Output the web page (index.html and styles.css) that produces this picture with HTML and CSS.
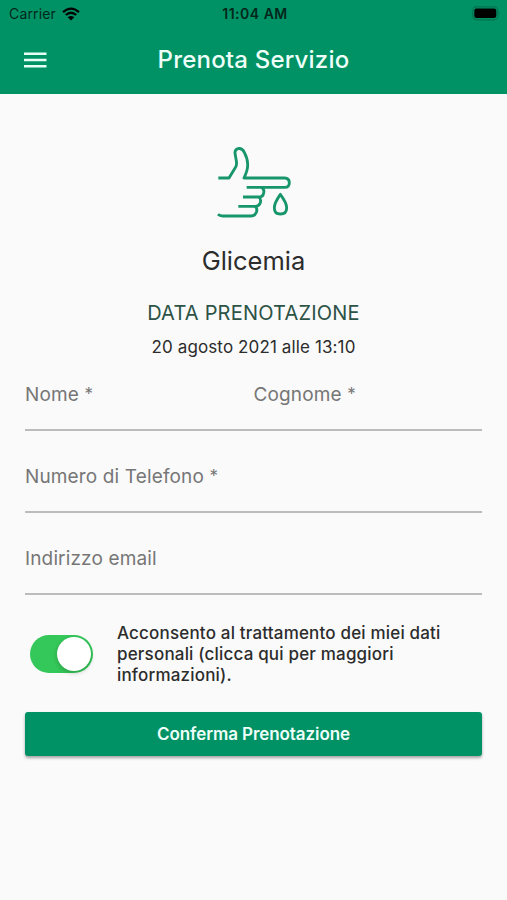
FILE: index.html
```
<!DOCTYPE html>
<html lang="it">

<head>
    <meta charset="UTF-8">
    <meta name="viewport" content="width=device-width, initial-scale=1.0">
    <title>Prenota Servizio</title>
    <link rel="stylesheet" href="styles.css">
</head>

<body>
    <header class="header">
        <div class="statusbar">
            <div class="carrier">
                <span>Carrier</span>
                <svg class="wifi" width="18" height="14" viewBox="0 0 18 14">
                    <path d="M1 5.2Q9-2 17 5.2" />
                    <path d="M3.8 8Q9 3.4 14.2 8" />
                    <path class="dot" d="M9 13.6L5.7 10.2Q9 7.6 12.3 10.2Z" />
                </svg>
            </div>
            <span class="time">11:04 AM</span>
            <svg class="battery" width="29" height="15" viewBox="0 0 29 15">
                <rect class="shell" x="0.8" y="0.8" width="25" height="13" rx="3.8" />
                <rect x="2.3" y="2.5" width="22" height="9.5" rx="2.2" />
                <path class="cap" d="M27 5.2Q28.8 7.3 27 9.4Z" />
            </svg>
        </div>
        <div class="appbar">
            <button class="menu" aria-label="Menu">
                <svg width="24" height="16" viewBox="0 0 24 16">
                    <path d="M1 1.8H23.5M1 8H23.5M1 14.2H23.5" />
                </svg>
            </button>
            <h1 class="title">Prenota Servizio</h1>
        </div>
    </header>

    <main class="content">
        <svg class="icon" width="76" height="74" viewBox="48 30 228 222">
            <path d="M55 126H87L107 93Q111 86 109 74L105 52Q104 41 114 38Q126 35 133 49Q144 70 143 88Q143 104 132 126H254Q268 127 268 140Q268 154 254 154H140" />
            <path d="M184 154Q194 160 191 171Q189 183 177 183H129" />
            <path d="M177 183Q184 190 181 200Q178 211 166 211H115" />
            <path d="M166 211Q174 220 168 231Q164 240 153 240H68Q59 240 54 235" />
            <path d="M241 175Q223 201 223 215Q223 234 241 234Q260 234 260 215Q260 201 241 175Z" />
        </svg>
        <h2 class="service">Glicemia</h2>
        <p class="caption">DATA PRENOTAZIONE</p>
        <p class="date">20 agosto 2021 alle 13:10</p>

        <form class="form">
            <div class="row">
                <div class="field">
                    <label for="nome">Nome <span class="required">*</span></label>
                    <input type="text" id="nome">
                </div>
                <div class="field">
                    <label for="cognome">Cognome <span class="required">*</span></label>
                    <input type="text" id="cognome">
                </div>
            </div>
            <div class="field">
                <label for="telefono">Numero di Telefono <span class="required">*</span></label>
                <input type="tel" id="telefono">
            </div>
            <div class="field">
                <label for="email">Indirizzo email</label>
                <input type="email" id="email">
            </div>

            <div class="consent">
                <button type="button" class="switch" role="switch" aria-checked="true" aria-label="Acconsento">
                    <span class="thumb"></span>
                </button>
                <p class="consent-text">Acconsento al trattamento dei miei dati personali (clicca qui per maggiori informazioni).</p>
            </div>

            <button type="button" class="submit">Conferma Prenotazione</button>
        </form>
    </main>
</body>

</html>
```
FILE: styles.css
```
* {
    box-sizing: border-box;
}

body {
    margin: 0;
    min-height: 900px;
    background-color: #fafafa;
    color: #2c2c2c;
    font-family: Inter, "Liberation Sans", sans-serif;
}

h1,
h2,
p {
    margin: 0;
}

button {
    border: none;
    padding: 0;
    font-family: inherit;
    cursor: pointer;
}

/* Header */
.header {
    height: 94px;
    background-color: #009265;
}

.statusbar {
    display: grid;
    grid-template-columns: 1fr auto 1fr;
    align-items: center;
    height: 27px;
    padding: 0 6px 0 9px;
    color: #04271b;
    font-size: 14px;
}

.carrier {
    display: flex;
    align-items: center;
    gap: 6px;
    letter-spacing: 0.15px;
}

.wifi {
    fill: none;
    stroke: #000;
    stroke-width: 2.3;
}

.wifi .dot {
    fill: #000;
    stroke: none;
}

.time {
    font-weight: 600;
    letter-spacing: 0.5px;
}

.battery {
    justify-self: end;
}

.battery .shell {
    fill: none;
    stroke: #04734f;
    stroke-width: 1.2;
}

.battery .cap {
    fill: #04734f;
}

.appbar {
    display: grid;
    grid-template-columns: 1fr auto 1fr;
    align-items: center;
    height: 66px;
    padding: 0 23px;
}

.menu {
    width: 24px;
    height: 16px;
    background: none;
}

.menu svg {
    display: block;
    fill: none;
    stroke: #e6fff6;
    stroke-width: 2.6;
}

.title {
    margin-top: -1px;
    color: #eefff9;
    font-size: 24px;
    font-weight: 500;
    letter-spacing: 0.2px;
}

/* Service summary */
.content {
    display: flex;
    flex-direction: column;
    align-items: center;
    padding: 52px 25px 0;
}

.icon {
    fill: none;
    stroke: #17966b;
    stroke-width: 8.5;
    stroke-linejoin: round;
}

.service {
    margin-top: 25px;
    font-size: 25.5px;
    font-weight: 400;
    line-height: 32px;
}

.caption {
    margin-top: 23px;
    color: #2c5346;
    font-size: 20px;
    line-height: 26px;
    letter-spacing: 0.2px;
}

.date {
    margin-top: 10px;
    font-size: 17px;
    line-height: 22px;
    letter-spacing: 0.12px;
}

/* Form */
.form {
    width: 100%;
    margin-top: 24px;
}

.row {
    display: grid;
    grid-template-columns: 1fr 1fr;
}

.field {
    height: 49px;
    margin-bottom: 33px;
    border-bottom: 2px solid #bcbcbc;
}

.field label {
    display: block;
    padding-top: 1px;
    color: #767676;
    font-size: 19px;
    line-height: 24px;
    letter-spacing: 0.14px;
}

.required {
    font-size: 17px;
    line-height: 1;
    vertical-align: 1px;
}

.field input {
    display: block;
    width: 100%;
    height: 21px;
    border: none;
    padding: 0;
    outline: none;
    background: none;
    font: inherit;
}

.consent {
    display: flex;
    align-items: center;
    gap: 24px;
    margin-top: -6px;
    padding-left: 5px;
}

.switch {
    display: flex;
    justify-content: flex-end;
    flex-shrink: 0;
    width: 63px;
    height: 38px;
    padding: 2px;
    border-radius: 19px;
    background-color: #34c759;
}

.thumb {
    width: 34px;
    height: 34px;
    border-radius: 50%;
    background-color: #fff;
    box-shadow: 0 2px 5px rgba(0, 0, 0, 0.2);
}

.consent-text {
    width: 345px;
    margin-bottom: -1px;
    padding-top: 1px;
    font-size: 17px;
    font-weight: 500;
    line-height: 21px;
    letter-spacing: 0.18px;
}

.submit {
    display: block;
    width: 100%;
    height: 44px;
    margin-top: 27px;
    border-radius: 3px;
    background-color: #009265;
    box-shadow: 0 2px 3px rgba(0, 0, 0, 0.35);
    color: #eefff9;
    font-size: 17px;
    font-weight: 600;
    letter-spacing: -0.08px;
}
```
